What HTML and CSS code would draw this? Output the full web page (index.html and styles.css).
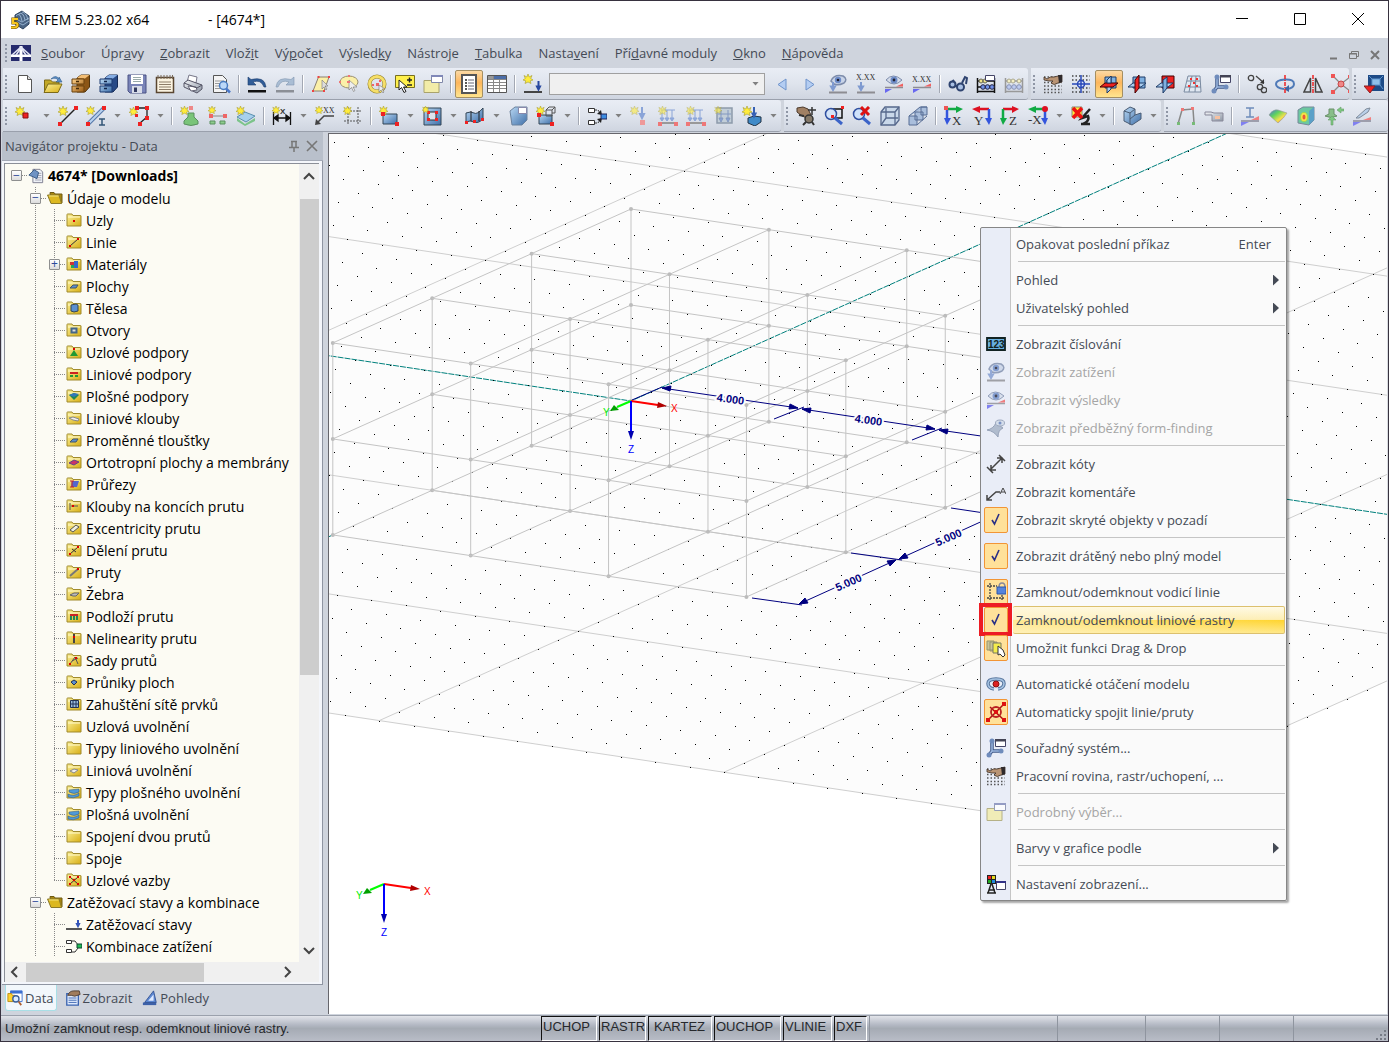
FILE: index.html
```html
<!DOCTYPE html>
<html lang="cs">
<head>
    <meta charset="UTF-8">
    <meta name="viewport" content="width=device-width, initial-scale=1.0">
    <title>RFEM 5.23.02 x64 - [4674*]</title>
    <link rel="stylesheet" href="styles.css">
</head>
<body>
    <!-- icon library -->
    <svg class="library" width="0" height="0" aria-hidden="true">
        <defs>
            <linearGradient id="g-blue" x1="0" y1="0" x2="1" y2="1"><stop offset="0" stop-color="#b9d8f4"/><stop offset="1" stop-color="#3f6fa8"/></linearGradient>
            <linearGradient id="g-gold" x1="0" y1="0" x2="1" y2="1"><stop offset="0" stop-color="#fbf19a"/><stop offset="1" stop-color="#d8ae14"/></linearGradient>
            <linearGradient id="g-orange" x1="0" y1="0" x2="1" y2="1"><stop offset="0" stop-color="#ffd28a"/><stop offset="1" stop-color="#9a5a12"/></linearGradient>
            <linearGradient id="g-grey" x1="0" y1="0" x2="1" y2="1"><stop offset="0" stop-color="#f2f4f7"/><stop offset="1" stop-color="#8d96a4"/></linearGradient>
            <linearGradient id="g-rainbow" x1="0" y1="0" x2="1" y2="1"><stop offset="0" stop-color="#4a6ee0"/><stop offset=".35" stop-color="#5fd35f"/><stop offset=".65" stop-color="#f4e04a"/><stop offset="1" stop-color="#e84a3a"/></linearGradient>

            <symbol id="star" viewBox="0 0 10 10"><path d="M5 0l1.200 3L9 1.500 7.700 4.500 10 6l-2.800.8L8 9.500 5 8 2 9.500l.8-2.700L0 6l2.300-1.500L1 1.500 3.800 3z" fill="#ffec3c" stroke="#a59a2c" stroke-width=".6"/></symbol>
            <symbol id="folder" viewBox="0 0 16 14"><path d="M1 3V1.500Q1 1 1.500 1H6l1 1.500h7.500q.5 0 .5.500v10H1z" fill="url(#g-gold)" stroke="#a08a2c"/><path d="M2 4h12" stroke="#fffbd0"/></symbol>
            <symbol id="folder-open" viewBox="0 0 16 14"><path d="M3 1.500h4l1 1.500h7v9H4z" fill="#a8860e" stroke="#6e5a12"/><path d="M.5 4H12l2.500 8.500H4z" fill="#dcb820" stroke="#8b7a2a"/><path d="M2 5h9.500" stroke="#f6e680"/></symbol>

            <symbol id="app" viewBox="0 0 20 20"><path d="M5 5l7-4 7 5v8l-6 5-8-5z" fill="#4a6484" stroke="#2f4560"/><path d="M6 6q4-5 6 5M9 4q4-3 6 6M12 2q4 0 6 8M6 9l6 3 7-4M7 12l6 3 6-4" fill="none" stroke="#a8c4e0" stroke-width=".8"/><path d="M8 9H3v4h2.500q2 0 2 2T5 17.500H1" fill="none" stroke="#6b4d00" stroke-width="3.200"/><path d="M8 9H3v4h2.500q2 0 2 2T5 17.500H1" fill="none" stroke="#f8c820" stroke-width="2"/></symbol>
            <symbol id="bridge" viewBox="0 0 20 16"><path d="M0 0h20v16H0z" fill="#252a6c"/><path d="M0 9.500h20v2.500H0zM8.500 1h3v15h-3z" fill="#fff"/><path d="M1 10L10 2l9 8M5 10l5-7 5 7" fill="none" stroke="#e4e6f4" stroke-width="1.500"/></symbol>
            <symbol id="new" viewBox="0 0 20 20"><path d="M3.500 1.500h9l4 4v13h-13z" fill="#fff" stroke="#555"/><path d="M12.500 1.500v4h4" fill="#ddd" stroke="#555"/></symbol>
            <symbol id="open" viewBox="0 0 20 20"><path d="M1.500 18V6h6l2 2H16v3" fill="#c2a826" stroke="#7c6a18"/><path d="M1 18.500L5 10h14l-4 8.500z" fill="url(#g-gold)" stroke="#7c6a18"/><path d="M8 5q5-5 8 0V3l3 5h-6l2-2q-2-3-7-1z" fill="#5b8fc8" stroke="#2f5a8c" stroke-width=".6"/></symbol>
            <symbol id="cabinet" viewBox="0 0 20 20"><path d="M6 4l4-3h8.500v12L14 18H6z" fill="#8c5616" stroke="#53350c"/><path d="M6 4l4-3h8.500L14 4.500z" fill="#f2bd74"/><path d="M1 5h12v5H1zM1 12h12v6H1z" fill="url(#g-orange)" stroke="#6a430e"/><path d="M5 7.500h3M5 14.500h3" stroke="#442a08" stroke-width="1.500"/></symbol>
            <symbol id="cabinet-blue" viewBox="0 0 20 20"><path d="M6 4l4-3h8.500v12L14 18H6z" fill="#284a86" stroke="#152b57"/><path d="M6 4l4-3h8.500L14 4.500z" fill="#86aee4"/><path d="M1 5h12v5H1zM1 12h12v6H1z" fill="url(#g-blue)" stroke="#1c3a70"/><path d="M5 7.500h3M5 14.500h3" stroke="#102448" stroke-width="1.500"/></symbol>
            <symbol id="save" viewBox="0 0 20 20"><path d="M1 1h18v18H3l-2-2z" fill="#7a84b8" stroke="#4a5284"/><path d="M4 1h12v9H4z" fill="#fff"/><path d="M6 3.500h8M6 5.500h8M6 7.500h8" stroke="#9aa"/><path d="M5 12h10v7H5z" fill="#d8dce8"/><path d="M7 13.500h3V18H7z" fill="#333a60"/></symbol>
            <symbol id="clip" viewBox="0 0 20 20"><path d="M1.500 3.500h17v15h-17z" fill="#fbf3e0" stroke="#5a4630" stroke-width="1.500"/><path d="M3 1v4M6 1v4M9 1v4M12 1v4M15 1v4M17.500 1v4" stroke="#7a6a58"/><path d="M4 8h12M4 10.500h12M4 13h12M4 15.500h12" stroke="#8c7c68"/></symbol>
            <symbol id="print" viewBox="0 0 20 20"><path d="M4 8L6 1l8 2-1 6z" fill="#fff" stroke="#778"/><path d="M1 9l4-3 14 5v4l-5 4L1 13z" fill="url(#g-grey)" stroke="#556"/><path d="M5 12l3 5 6-1-1-3z" fill="#fff" stroke="#667"/><path d="M1 9l13 5 5-3" fill="none" stroke="#556"/></symbol>
            <symbol id="preview" viewBox="0 0 20 20"><path d="M2.500 1.500h9l4 4v13h-13z" fill="#f4f4f4" stroke="#555"/><path d="M4 7h9M4 9.500h9M4 12h9M4 14.500h9" stroke="#999"/><circle cx="12.500" cy="11.500" r="4" fill="#bcd8f8" stroke="#4a7cc0" stroke-width="1.500"/><path d="M15 14.500l4 4" stroke="#4a78c8" stroke-width="2.500"/></symbol>
            <symbol id="undo" viewBox="0 0 20 20"><path d="M1 3v8h8L6 8q8-3 11 5h2Q18 2 4 5.500z" fill="#2f5c98" stroke="#1c3c6c" stroke-width=".6"/><path d="M1 16h18v2.500H1z" fill="#111"/></symbol>
            <symbol id="redo" viewBox="0 0 20 20"><path d="M19 3v8h-8l3-3q-8-3-11 5H1Q2 2 16 5.500z" fill="#a9bdd4" stroke="#8095ae" stroke-width=".6"/><path d="M1 16h18v2.500H1z" fill="#8b8f96"/></symbol>
            <symbol id="plane" viewBox="0 0 20 20"><path d="M7.500 3H18l-5 14H2z" fill="#fbf0a8" stroke="#8a8070"/><path d="M11 6v9l2-2 2 3 1-1-2-3h3z" fill="#ddd" stroke="#777" stroke-width=".6"/><path d="M6.500 2h2v2h-2zM17 2h2v2h-2zM1 16h2v2H1zM12 16h2v2h-2z" fill="#e44"/></symbol>
            <symbol id="ellipse" viewBox="0 0 20 20"><ellipse cx="10" cy="8" rx="9" ry="6" fill="#fbf0a8" stroke="#9a9070"/><path d="M10 6v10l2.500-2.500 2 4 1.500-1-2-3.500h4z" fill="#eee" stroke="#777" stroke-width=".6"/><path d="M0 7h2v2H0zM9 1h2v2H9zM8 7h3v2H8z" fill="#e77"/></symbol>
            <symbol id="circle-sel" viewBox="0 0 20 20"><circle cx="10" cy="10" r="7.500" fill="none" stroke="#968430" stroke-width="4"/><circle cx="10" cy="10" r="7.500" fill="none" stroke="#f6df68" stroke-width="2.800"/><path d="M9 9h3v3H9zM12 6h2v2h-2zM5 10h2v2H5z" fill="#e66"/><path d="M12 11v7l2-2 2 3 1-1-2-3h3z" fill="#eee" stroke="#777" stroke-width=".6"/></symbol>
            <symbol id="pick" viewBox="0 0 20 20"><path d="M.5 1.500h19v12H.5z" fill="#fff04c" stroke="#776e20"/><path d="M4 6v10l2.500-2.500 2.500 5 2-1-2.500-4.500H12z" fill="#fff" stroke="#222"/><path d="M12 6h5M14.500 3.500v5M12 11h5" stroke="#222" stroke-width="1.500"/></symbol>
            <symbol id="folder-win" viewBox="0 0 20 20"><path d="M1 18.500V6.500h9l2 2h4v10z" fill="#f2eca8" stroke="#a9a36c"/><path d="M8.500 1.500h11v7h-11z" fill="#fff" stroke="#8088a8"/><path d="M8 1h12v2H8z" fill="#8088b8"/></symbol>
            <symbol id="list" viewBox="0 0 20 20"><path d="M3 1h14v18H3z" fill="#fff" stroke="#555" stroke-width="2"/><path d="M6 6h2M6 9h2M6 12h2M6 15h2" stroke="#222" stroke-width="1.500"/><path d="M9 6h6M9 9h6M9 12h6M9 15h6" stroke="#667"/></symbol>
            <symbol id="table" viewBox="0 0 20 20"><path d="M.5 1.500h19v17H.5z" fill="#fff" stroke="#555"/><path d="M1 2h5v3H1z" fill="#999"/><path d="M6 2h13v3H6z" fill="#4c6ea8"/><path d="M1 5.500h18M1 8.500h18M1 11.500h18M1 14.500h18M6.500 2v16M12.500 5v13" stroke="#888"/></symbol>
            <symbol id="loadcase" viewBox="0 0 20 20"><use href="#star" width="10" height="10"/><path d="M1 18h18" stroke="#444" stroke-width="2"/><path d="M15.500 7v7M14 12.500l1.500 3 1.500-3z" fill="#3454b8" stroke="#2848a0" stroke-width="2"/></symbol>
            <symbol id="prev" viewBox="0 0 20 20"><path d="M14 5v11L6 10.500z" fill="#b4cdf2" stroke="#6f94cc"/></symbol>
            <symbol id="next" viewBox="0 0 20 20"><path d="M6 5v11l8-5.500z" fill="#b4cdf2" stroke="#6f94cc"/></symbol>
            <symbol id="eye-load" viewBox="0 0 20 20"><path d="M3 7q3-7 12-5 5 3 1 7-6 3-10 1z" fill="#c9d4e8" stroke="#7d8cab" stroke-width="1.500"/><circle cx="10" cy="6" r="3.200" fill="#6d8cc8"/><circle cx="10" cy="6" r="1.300" fill="#223"/><path d="M5 8v6M3 12.500l2 3.500 2-3.500z" fill="#8fa9dc" stroke="#7f9ad0" stroke-width="2"/><path d="M1 18.500h18" stroke="#8d8d92" stroke-width="2"/></symbol>
            <symbol id="xxx-load" viewBox="0 0 20 20"><text x="0" y="6" class="tiny serif">X.XX</text><path d="M5 8v6M3 12.500l2 3.500 2-3.500z" fill="#8fa9dc" stroke="#7f9ad0" stroke-width="2"/><path d="M1 18.500h18" stroke="#8d8d92" stroke-width="2"/></symbol>
            <symbol id="eye-res" viewBox="0 0 20 20"><path d="M2 6q7-8 16 0-8 8-16 0z" fill="#d5dcea" stroke="#7d8cab"/><circle cx="10" cy="6" r="3.500" fill="#6d8cc8"/><circle cx="10" cy="6" r="1.400" fill="#223"/><path d="M1 13.500h18" stroke="#8d8d92" stroke-width="1.500"/><path d="M12 12.500l7-3v3z" fill="#f06060"/><path d="M1 15v4l7-4z" fill="#6868f0"/></symbol>
            <symbol id="xxx-res" viewBox="0 0 20 20"><text x="0" y="8" class="tiny serif">X.XX</text><path d="M1 13.500h18" stroke="#8d8d92" stroke-width="1.500"/><path d="M12 12.500l7-3v3z" fill="#f06060"/><path d="M1 15v4l7-4z" fill="#6868f0"/></symbol>
            <symbol id="glasses" viewBox="0 0 20 20"><path d="M3 9l3-3M14 9l3-6 2 1-1 6M7 12h3" fill="none" stroke="#2f4470" stroke-width="2"/><circle cx="4.500" cy="10.500" r="3" fill="#a9c0e4" stroke="#2f4470" stroke-width="2"/><circle cx="12.500" cy="13" r="3.500" fill="#a9c0e4" stroke="#2f4470" stroke-width="2"/></symbol>
            <symbol id="abacus" viewBox="0 0 20 20"><path d="M1.500 4v15M18.500 4v15M1 7h18M1 13h18M1 17.500h18" stroke="#111" stroke-width="1.500"/><g fill="#f0e48c" stroke="#665"><circle cx="5" cy="7" r="2"/><circle cx="9" cy="7" r="2"/></g><g fill="#6f90e8" stroke="#224"><circle cx="7" cy="13" r="2.300"/><circle cx="11.500" cy="13" r="2.300"/><circle cx="16" cy="13" r="2.300"/></g><path d="M9.500 1.500h9v5h-9z" fill="#fff" stroke="#446"/></symbol>
            <symbol id="abacus-off" viewBox="0 0 20 20"><path d="M1.500 4v15M18.500 4v15M1 7h18M1 13h18M1 17.500h18" stroke="#999" stroke-width="1.500"/><g fill="#f4efc4" stroke="#aaa890"><circle cx="5" cy="7" r="2"/><circle cx="9" cy="7" r="2"/><circle cx="15" cy="7" r="2"/></g><g fill="#bccaf0" stroke="#8892b4"><circle cx="5" cy="13" r="2.300"/><circle cx="10" cy="13" r="2.300"/><circle cx="15" cy="13" r="2.300"/></g></symbol>
            <symbol id="hand-grid" viewBox="0 0 20 20"><path d="M1 12h18M1 15.500h18M1 18.500h18M1 8.500h18M1 3h18" stroke="#555" stroke-width="1.500" stroke-dasharray="1.500 2"/><path d="M1 3l3 2q3-3 7-2l8-2v7l-4 1q-4 3-7 0l2-2-4 0-5-1z" fill="#b99474" stroke="#3c2e24" stroke-width=".8"/><path d="M15 1l4 0v7l-3 1z" fill="#2f2a2c"/></symbol>
            <symbol id="snap" viewBox="0 0 20 20"><path d="M1 2h18M1 6h18M1 14h18M1 18h18" stroke="#444" stroke-width="1.500" stroke-dasharray="1.500 2"/><circle cx="10" cy="10" r="3.500" fill="#dfe8fa" stroke="#2848b8" stroke-width="1.500"/><path d="M10 1v18M1 10h18" stroke="#2848b8" stroke-width="1.500"/></symbol>
            <symbol id="cube-h" viewBox="0 0 20 20"><path d="M6 3h11v11H6z" fill="#7fb0e0" stroke="#1d3a66"/><path d="M8 6l4-4v13l-4 4z" fill="#a9ccee" stroke="#1d3a66"/><path d="M1 13l5-4h13l-5 4z" fill="#e22" stroke="#400"/><path d="M8 6l4-4v7H8z" fill="#a9ccee" stroke="#1d3a66"/></symbol>
            <symbol id="cube-v" viewBox="0 0 20 20"><path d="M6 3h12v11H6z" fill="#7fb0e0" stroke="#1d3a66"/><path d="M1 13l5-4h13l-5 4z" fill="#a9ccee" stroke="#1d3a66"/><path d="M8 6l4-5v13l-4 5z" fill="#e22" stroke="#400"/></symbol>
            <symbol id="cube-f" viewBox="0 0 20 20"><path d="M7 2h12v12H7z" fill="#e22" stroke="#400"/><path d="M1 13l5-4h12l-5 4z" fill="#a9ccee" stroke="#1d3a66"/><path d="M8 6l4-3v11l-4 5z" fill="#7fb0e0" stroke="#1d3a66"/></symbol>
            <symbol id="mesh" viewBox="0 0 20 20"><path d="M5 2h12l1 16H1zM4 7h13M2 13h16M9 2L6 18M13 2l-1 16" fill="#dfe7f1" stroke="#7a8aa0"/><path d="M7 4h2v2H7zM13 4h2v2h-2zM5 11h2v2H5zM13 11h2v2h-2zM10 8h2v2h-2z" fill="#e33"/></symbol>
            <symbol id="axes" viewBox="0 0 20 20"><path d="M6 3v10M6 13h8M6 13l-3 4" stroke="#3f5888" stroke-width="3.500"/><path d="M6 3v10M6 13h8M6 13l-3 4" stroke="#9db8e0" stroke-width="1.500"/><circle cx="6" cy="3" r="2.500" fill="#6f8cbc"/><circle cx="3" cy="17" r="2.500" fill="#6f8cbc"/><circle cx="15" cy="13" r="2.500" fill="#6f8cbc"/><path d="M9.500 1.500h10v7h-10z" fill="#fff" stroke="#446"/><path d="M9 1h11v2.500H9z" fill="#445"/></symbol>
            <symbol id="copy-move" viewBox="0 0 20 20"><g fill="none" stroke="#444" stroke-width="1.300"><circle cx="4" cy="4" r="2.700"/><circle cx="13" cy="13" r="2.700"/><circle cx="17" cy="16" r="2.700"/><path d="M9 2l8 7"/></g><path d="M17 10V5l-4 4z" fill="#333"/></symbol>
            <symbol id="rotate" viewBox="0 0 20 20"><path d="M9 15q-8-1-8-5t9-4.500T19 10q0 4-7 5" fill="none" stroke="#4f7ab8" stroke-width="2"/><path d="M14 11v7l-5-3z" fill="#3c66a4"/><path d="M10 1v18" stroke="#e22" stroke-width="1.500" stroke-dasharray="4 1 1 1"/></symbol>
            <symbol id="mirror" viewBox="0 0 20 20"><path d="M7.500 4v14H1zM12.500 4v14H19z" fill="none" stroke="#444" stroke-width="1.500"/><path d="M10 1v18" stroke="#e22" stroke-width="1.500" stroke-dasharray="4 1 1 1"/></symbol>
            <symbol id="connect" viewBox="0 0 20 20"><path d="M2 2l8 8 9-7M10 10l9 7M10 10l-8 8" fill="none" stroke="#888" stroke-width="1.300"/><circle cx="10" cy="10" r="3" fill="#e88" stroke="#c44"/><path d="M0 0h4v4H0zM0 16h4v4H0zM17 1h3v3h-3zM17 16h3v3h-3z" fill="#e55"/></symbol>
            <symbol id="export" viewBox="0 0 20 20"><path d="M4 1h16v16H4z" fill="#1d4a86"/><path d="M8 5h8v6H8zM5 2l3 3M19 2l-3 3M19 15l-3-4" fill="#8fc0ea" stroke="#5f94cc"/><path d="M0 12h11l-5 7z" fill="#e22" stroke="#822"/></symbol>

            <symbol id="node-new" viewBox="0 0 20 20"><use href="#star" width="10" height="10"/><path d="M8 7h5v5H8z" fill="#e22" stroke="#811"/></symbol>
            <symbol id="line-new" viewBox="0 0 20 20"><path d="M2 18L18 2" stroke="#222" stroke-width="1.500"/><use href="#star" width="10" height="10"/><path d="M0 16h4v4H0zM16 0h4v4h-4z" fill="#e22"/></symbol>
            <symbol id="member-new" viewBox="0 0 20 20"><path d="M2 18L18 2" stroke="#5578a8" stroke-width="4"/><path d="M2 18L18 2" stroke="#b9d2f0" stroke-width="2"/><use href="#star" width="9" height="9"/><path d="M0 16h4v4H0zM16 0h4v4h-4z" fill="#e22"/><path d="M13 13h6M13 19h6M16 13v6" stroke="#357" stroke-width="1.500"/></symbol>
            <symbol id="poly-new" viewBox="0 0 20 20"><path d="M8 2h10v9l-7 6" fill="none" stroke="#222" stroke-width="1.300"/><use href="#star" y="1" width="9" height="9"/><path d="M6 0h4v4H6zM16 0h4v4h-4zM16 10h4v4h-4zM9 16h4v4H9zM6 8h3v3H6z" fill="#e22"/></symbol>
            <symbol id="support" viewBox="0 0 20 20"><use href="#star" width="9" height="9"/><path d="M9 0h4v4H9z" fill="#e88"/><path d="M8 7h6v4l4 4v3q-7 3-14 0v-3l4-4z" fill="#79c479" stroke="#5a9060"/></symbol>
            <symbol id="support-line" viewBox="0 0 20 20"><path d="M3 10h14" stroke="#888"/><use href="#star" width="8" height="8"/><path d="M1 8h4v4H1zM15 8h4v4h-4z" fill="#e66"/><path d="M2 15h5v3H2zM12 15h5v3h-5z" fill="#8ccc8c" stroke="#5a9060"/></symbol>
            <symbol id="support-area" viewBox="0 0 20 20"><path d="M1 12l8 6 10-6v3l-10 5-8-5z" fill="#7cc48a"/><path d="M1 11l8-5 10 4-9 6z" fill="#a7d0ee" stroke="#5b90ae"/><use href="#star" width="9" height="9"/></symbol>
            <symbol id="dim" viewBox="0 0 20 20"><path d="M1.500 6v13M18.500 6v13M1 12h18M2 12l4-3v6zM18 12l-4-3v6z" stroke="#111" stroke-width="1.300"/><text x="8" y="8" class="tiny bold">X</text><use href="#star" width="8" height="8"/></symbol>
            <symbol id="comment" viewBox="0 0 20 20"><path d="M2 17l7-7h10" fill="none" stroke="#444" stroke-width="1.500"/><path d="M0 19l1-6 5 5z" fill="#444"/><text x="8" y="7" class="tiny serif">XX</text><use href="#star" width="8" height="8"/></symbol>
            <symbol id="guide" viewBox="0 0 20 20"><path d="M1 5h18M1 15h18M5 1v18M15 1v18" stroke="#555" stroke-dasharray="2 1"/><use href="#star" width="9" height="9"/></symbol>
            <symbol id="surface" viewBox="0 0 20 20"><path d="M4 8h14v10H4z" fill="url(#g-blue)" stroke="#345"/><use href="#star" width="9" height="9"/><path d="M2 6h4v4H2zM16 16h4v4h-4z" fill="#e22"/></symbol>
            <symbol id="opening" viewBox="0 0 20 20"><path d="M2 2h17v17H2z" fill="url(#g-blue)" stroke="#345"/><path d="M6 6h8v8H6z" fill="#dde3ee" stroke="#333"/><path d="M5 5h3v3H5zM13 5h3v3h-3zM5 12h3v3H5zM13 12h3v3h-3z" fill="#e22"/><use href="#star" width="7" height="7"/></symbol>
            <symbol id="curved" viewBox="0 0 20 20"><path d="M1 7q5-2 8 0t9-5v11q-5 5-9 3t-8 0z" fill="url(#g-blue)" stroke="#345"/><path d="M6 5v10M14 5v10" stroke="#222"/><path d="M0 15h3v3H0zM8 14h3v3H8zM16 12h3v3h-3z" fill="#e22"/></symbol>
            <symbol id="solid" viewBox="0 0 20 20"><path d="M2 5l5-4h12v13l-5 5H4z" fill="url(#g-blue)" stroke="#6b829e"/><path d="M10.500 1.500h8v6h-8z" fill="#fff" stroke="#88a"/></symbol>
            <symbol id="solid-new" viewBox="0 0 20 20"><path d="M3 9h13v9H3z" fill="url(#g-blue)" stroke="#345"/><path d="M10 4h6v6h-6zM13 1h6v6h-3M10 4l3-3M16 4l3-3" fill="none" stroke="#555"/><use href="#star" width="9" height="9"/><path d="M1 7h4v4H1zM14 16h4v4h-4z" fill="#e22"/></symbol>
            <symbol id="combo" viewBox="0 0 20 20"><path d="M1.500 2.500h6v4h-6zM1.500 14.500h6v4h-6z" fill="#fff" stroke="#333"/><path d="M8 4h3l3 5M8 17h3l3-5" fill="none" stroke="#333" stroke-dasharray="2 1"/><path d="M10 8l5 1-1-5zM10 13l5-1-1 5z" fill="#222"/><path d="M14 8h6v5h-6z" fill="#3c8be0" stroke="#225"/></symbol>
            <symbol id="load-node" viewBox="0 0 20 20"><path d="M12 1v8M10 8l2 4 2-4z" fill="#9fb6e4" stroke="#8aa4d8" stroke-width="2"/><path d="M10 14h5v5h-5z" fill="#e99"/><use href="#star" width="9" height="9" opacity=".6"/></symbol>
            <symbol id="load-line" viewBox="0 0 20 20"><path d="M3 4h14M4 4v10M9 4v10M14 4v10M2 12l2 3 2-3zM7 12l2 3 2-3zM12 12l2 3 2-3z" fill="#9fb6e4" stroke="#8aa4d8"/><path d="M1 17h18" stroke="#999" stroke-width="2"/><path d="M0 16h4v4H0zM16 16h4v4h-4z" fill="#e77"/><use href="#star" width="9" height="9" opacity=".6"/></symbol>
            <symbol id="load-area" viewBox="0 0 20 20"><path d="M3 2h15v15H3z" fill="#c2ced8" stroke="#8d9bab" stroke-width="1.500"/><path d="M7 4v9M14 4v9M4 8h13M5 12l2 4 2-4zM12 12l2 4 2-4z" fill="#8aa4d8" stroke="#8298c0"/><use href="#star" width="8" height="8" opacity=".6"/></symbol>
            <symbol id="load-free" viewBox="0 0 20 20"><path d="M6 12l6-2 7 1v5l-6 4-7-3z" fill="#3f8ac8" stroke="#234"/><path d="M12 1v8M10.500 7.500l1.500 3 1.500-3z" fill="#4c76c8" stroke="#3560b4" stroke-width="2"/><use href="#star" width="10" height="10"/></symbol>
            <symbol id="hand-pan" viewBox="0 0 20 20"><path d="M1 2l6-1 5 2 3 6-4 3-5-2-5-4z" fill="#a08064" stroke="#4c3a2c"/><path d="M16 1v8M12 4h8" stroke="#333" stroke-width="1.500"/><circle cx="13" cy="13" r="4" fill="#847868" stroke="#333" stroke-width="1.500"/><path d="M10 16l-3 3M16 16l2 3M8 10l-5-1" stroke="#333" stroke-width="2"/></symbol>
            <symbol id="zoom-win" viewBox="0 0 20 20"><path d="M7 3h11v9H9" fill="none" stroke="#111" stroke-width="1.500"/><circle cx="7" cy="8" r="5.500" fill="#cfe2fa" fill-opacity=".8" stroke="#2f4fa0" stroke-width="1.500"/><path d="M11 12l7 6" stroke="#3c64c8" stroke-width="3"/><path d="M17 0h3v3h-3zM7 9h3v3H7z" fill="#e22"/></symbol>
            <symbol id="zoom-x" viewBox="0 0 20 20"><circle cx="7" cy="8" r="5.500" fill="#cfe2fa" stroke="#2f4fa0" stroke-width="1.500"/><path d="M11 12l7 6" stroke="#3c64c8" stroke-width="3"/><path d="M9 1l8 8M17 1L9 9" stroke="#d11" stroke-width="3"/></symbol>
            <symbol id="wire" viewBox="0 0 20 20"><path d="M1 6l4-5h14v13l-4 5H1z" fill="#c9d8ea" stroke="#56688c" stroke-width="1.300"/><path d="M1 6h14v13M15 6l4-5M6 2v10h12M6 12l-5 7" fill="none" stroke="#56688c" stroke-width="1.300"/></symbol>
            <symbol id="boxes" viewBox="0 0 20 20"><path d="M1 10h8v9H1zM7 6h8v8H7zM13 1h6v8h-6zM1 10L12 1h7M9 19l10-9" fill="#a9bedc" stroke="#566c94"/></symbol>
            <symbol id="view-x" viewBox="0 0 20 20"><path d="M3 3h10" stroke="#1a4" stroke-width="2.500"/><path d="M12 0l7 3-7 4z" fill="#1a4"/><path d="M3 3v10" stroke="#35d" stroke-width="2.500"/><path d="M0 12l3 7 4-7z" fill="#35d"/><path d="M0 0h4v4H0z" fill="#e55"/><text x="8" y="19" class="letter serif">X</text></symbol>
            <symbol id="view-y" viewBox="0 0 20 20"><path d="M17 3H7" stroke="#d12" stroke-width="2.500"/><path d="M8 0L0 3l8 4z" fill="#d12"/><path d="M17 3v10" stroke="#35d" stroke-width="2.500"/><path d="M13 12l4 7 3-7z" fill="#35d"/><text x="2" y="19" class="letter serif">Y</text></symbol>
            <symbol id="view-z" viewBox="0 0 20 20"><path d="M3 3h10" stroke="#d12" stroke-width="2.500"/><path d="M12 0l7 3-7 4z" fill="#d12"/><path d="M3 3v10" stroke="#1a4" stroke-width="2.500"/><path d="M0 12l3 7 4-7z" fill="#1a4"/><text x="9" y="19" class="letter serif">Z</text></symbol>
            <symbol id="view-mx" viewBox="0 0 20 20"><path d="M16 3H7" stroke="#1a4" stroke-width="2.500"/><path d="M8 0L0 3l8 4z" fill="#1a4"/><path d="M17 3v10" stroke="#35d" stroke-width="2.500"/><path d="M13 12l4 7 3-7z" fill="#35d"/><circle cx="17" cy="3" r="3" fill="#d12"/><text x="0" y="18" class="letter serif">-X</text></symbol>
            <symbol id="no-view" viewBox="0 0 20 20"><path d="M10 18h9M12 18q7-3 5-8l-6 2 8-9" fill="none" stroke="#222" stroke-width="2.500"/><path d="M1 1h10v10H1z" fill="#ffe93c" stroke="#887"/><path d="M2 2l9 10M11 2L2 12" stroke="#e11" stroke-width="3.500"/></symbol>
            <symbol id="profile" viewBox="0 0 20 20"><path d="M2 5l6-4 5 2v6l6-2v6l-9 6-8-4z" fill="url(#g-blue)" stroke="#4a5c74"/><path d="M2 5l6 2v12M8 7l5-4M8 13l5-4" fill="none" stroke="#4a5c74"/></symbol>
            <symbol id="frame" viewBox="0 0 20 20"><path d="M2 18L6 4l11-1 1 14" fill="none" stroke="#888" stroke-width="1.500"/><path d="M5 2h3v3H5zM15 1h3v3h-3z" fill="#e77"/><path d="M1 16h3v3H1zM16 16h3v3h-3z" fill="#7b7"/></symbol>
            <symbol id="camera" viewBox="0 0 20 20"><path d="M1 6h6l3 1h9v8H8V9H1z" fill="url(#g-grey)" stroke="#889"/><path d="M11 10h5v3h-5z" fill="#f6c0a0"/></symbol>
            <symbol id="res-beam" viewBox="0 0 20 20"><path d="M6 2h8M6 11h8M10 2v9" stroke="#6e8cba" stroke-width="1.500"/><path d="M1 15h18" stroke="#889" stroke-width="1.300"/><path d="M11 14l8-4v4z" fill="#f08080"/><path d="M1 16v4l8-4z" fill="#8080f0"/></symbol>
            <symbol id="res-area" viewBox="0 0 20 20"><path d="M1 9q4-6 9-5l9 3q-3 5-9 10z" fill="url(#g-rainbow)" stroke="#999" stroke-width=".6"/></symbol>
            <symbol id="res-solid" viewBox="0 0 20 20"><path d="M2 4l5-3h11v13l-5 5-11-2z" fill="#6cc8a0" stroke="#789"/><path d="M13 5l5-4v13l-5 5z" fill="#5aa0c8"/><ellipse cx="8" cy="11" rx="3.500" ry="4.500" fill="#f6e24a" stroke="#a0d84a"/><ellipse cx="8" cy="11" rx="1.500" ry="2.500" fill="#e85a3a"/></symbol>
            <symbol id="reaction" viewBox="0 0 20 20"><path d="M5 3h5v5l3 2q-6 3-12 0l4-2z" fill="#88be88" stroke="#6a906a"/><path d="M13 4l4-3v2h3v2h-3v2zM7 19v-5H4l4-4 4 4H9v5z" fill="#7cc880" stroke="#6aa06a" stroke-width=".6"/></symbol>
            <symbol id="res-line" viewBox="0 0 20 20"><path d="M4 12L14 3l4-1-2 4-9 6z" fill="#b9cfe8" stroke="#7e8a9a"/><path d="M1 15h18" stroke="#889" stroke-width="1.300"/><path d="M11 14l8-3v3z" fill="#f08080"/><path d="M1 16v4l8-4z" fill="#8080f0"/></symbol>

            <symbol id="m123" viewBox="0 0 20 20"><path d="M1 4h18v12H1z" fill="#68b0e0" stroke="#122" stroke-width="1.800"/><text x="2" y="14" class="number bold">123</text></symbol>
            <symbol id="form" viewBox="0 0 20 20"><path d="M1 12q6-1 9-7l7 5q-5 2-5 9-4-6-11-7z" fill="#a3b0c4" stroke="#808fa8"/><ellipse cx="14" cy="5" rx="4.500" ry="3" fill="#d0dae8" stroke="#8a98b0"/><circle cx="14" cy="5" r="1.500" fill="#5f7cb8"/></symbol>
            <symbol id="mdim" viewBox="0 0 20 20"><path d="M1 13l6 6M13 1l6 6M4 16L16 4M5 11v5h5M11 4h5v5" fill="none" stroke="#444" stroke-width="1.500"/></symbol>
            <symbol id="mcomment" viewBox="0 0 20 20"><path d="M1 18l9-8h4M1 13v5h5" fill="none" stroke="#444" stroke-width="1.500"/><path d="M14 12l3-6 3 6M15 10h4" fill="none" stroke="#444"/></symbol>
            <symbol id="tick" viewBox="0 0 20 20"><path d="M6 10l2.500 4L13 4" fill="none" stroke="#2a2f86" stroke-width="1.600"/></symbol>
            <symbol id="lock-grid" viewBox="0 0 20 20"><path d="M1 4h10M1 16h18M4 1v18M16 13v6" stroke="#444" stroke-width="1.300" stroke-dasharray="2 1"/><path d="M13 5q0-4 3-4t3 4" fill="none" stroke="#889" stroke-width="1.500"/><path d="M11 5h9v7h-9z" fill="#5584dc" stroke="#2f56a8"/></symbol>
            <symbol id="drag" viewBox="0 0 20 20"><path d="M1 3h7v9H1zM4 4h7v9H4z" fill="#c8c49a" stroke="#98946c"/><path d="M7 5h8v10H7z" fill="#f4ec4c" stroke="#776"/><path d="M12 8v9l2-1 3 3 2-2-2-5z" fill="#fff" stroke="#333"/></symbol>
            <symbol id="auto-rot" viewBox="0 0 20 20"><path d="M8 15q-6-1-6-5.500T10 5t8 4.500-6 5.500" fill="none" stroke="#56749c" stroke-width="3.500"/><path d="M8 15q-6-1-6-5.500T10 5t8 4.500-6 5.500" fill="none" stroke="#a5c2e2" stroke-width="1.500"/><circle cx="10" cy="10" r="3" fill="#d22" stroke="#811"/></symbol>
            <symbol id="auto-con" viewBox="0 0 20 20"><path d="M2 18L18 2M4 5l14 13" stroke="#a11" stroke-width="1.500"/><circle cx="10" cy="10" r="5" fill="none" stroke="#b22" stroke-width="1.800"/><path d="M0 16h4v4H0zM16 0h4v4h-4zM16 16h4v4h-4zM8 8h4v4H8z" fill="#d11"/></symbol>
            <symbol id="display" viewBox="0 0 20 20"><path d="M1 1h9v9H1z" fill="#222"/><path d="M2 2h3v3H2z" fill="#e22"/><path d="M6 2h3v3H6z" fill="#e8d820"/><path d="M2 6h3v3H2z" fill="#2a2"/><path d="M6 6h3v3H6z" fill="#28d"/><path d="M5 10L2 19M6 10l3 9M3 16h6M1 19h9" stroke="#222" stroke-width="1.500"/><path d="M10.500 7.500h9v8h-9z" fill="#fff" stroke="#446"/><path d="M10 7h10v2H10z" fill="#338"/></symbol>

            <symbol id="t-data" viewBox="0 0 18 18"><path d="M4 1h13v12H4z" fill="#fff" stroke="#3b6fd0"/><path d="M4 1h13v3H4z" fill="#3b6fd0"/><path d="M1 4h4l1 2h3v7H1z" fill="#ffd22e" stroke="#b98a10"/><circle cx="10" cy="10" r="3.500" fill="#dcecff" stroke="#3a5f98" stroke-width="1.500"/><path d="M13 13l3 4" stroke="#b06030" stroke-width="2"/></symbol>
            <symbol id="t-show" viewBox="0 0 18 18"><path d="M2 4h13v13H2z" fill="#dfeafc" stroke="#3b64b0" stroke-width="1.500"/><path d="M4 9h9M4 11.500h9M4 14h9" stroke="#3b64b0"/><path d="M3 6q2-5 7-5h6l1 4-6 2-4-1z" fill="#a07c5c" stroke="#4c3a2c"/></symbol>
            <symbol id="t-views" viewBox="0 0 18 18"><path d="M1 14h15v3H1z" fill="#3c60a8"/><path d="M3 14L13 1l3 13z" fill="#5f8ad4" stroke="#2f4f90"/><path d="M7 12l6-7v7z" fill="#dfeaff"/></symbol>
            <symbol id="doc" viewBox="0 0 18 18"><path d="M5.500 1.500h8l3 3v12h-11z" fill="#eef1f6" stroke="#778"/><path d="M10 6h5M10 8.500h5M8 11h7M8 13.500h7" stroke="#99a"/><path d="M1 8l6-6 5 3-2 7-4-2z" fill="#6f93c4" stroke="#34557f"/></symbol>
        </defs>
    </svg>

    <div class="window">
        <header class="titlebar">
            <svg class="icon"><use href="#app"/></svg>
            <h1 class="title">RFEM 5.23.02 x64</h1>
            <span class="document">- [4674*]</span>
            <div class="window-buttons">
                <button type="button" aria-label="Minimalizovat"><svg width="14" height="14"><path d="M1 6.500h12" stroke="#000"/></svg></button>
                <button type="button" aria-label="Maximalizovat"><svg width="14" height="14"><path d="M1.500 1.500h11v11h-11z" fill="none" stroke="#000"/></svg></button>
                <button type="button" aria-label="Zavřít"><svg width="14" height="14"><path d="M1 1l12 12M13 1L1 13" stroke="#000"/></svg></button>
            </div>
        </header>

        <nav class="menubar">
            <span class="grip"></span>
            <svg class="bridge"><use href="#bridge"/></svg>
            <div class="menus">
                <button type="button"><u>S</u>oubor</button>
                <button type="button">Úpr<u>a</u>vy</button>
                <button type="button"><u>Z</u>obrazit</button>
                <button type="button">Vlož<u>i</u>t</button>
                <button type="button">Vý<u>p</u>očet</button>
                <button type="button">Výsled<u>k</u>y</button>
                <button type="button">Nástro<u>j</u>e</button>
                <button type="button"><u>T</u>abulka</button>
                <button type="button">Nasta<u>v</u>ení</button>
                <button type="button">Pří<u>d</u>avné moduly</button>
                <button type="button"><u>O</u>kno</button>
                <button type="button"><u>N</u>ápověda</button>
            </div>
            <div class="mdi-buttons">
                <button type="button" aria-label="Minimalizovat okno"><svg width="10" height="10"><path d="M2 8.500h7" stroke="#777" stroke-width="2"/></svg></button>
                <button type="button" aria-label="Obnovit okno"><svg width="10" height="10"><path d="M.5 3.500h7v5h-7zM2.500 3V1.500h7v5H8M0 4h8" fill="none" stroke="#777"/></svg></button>
                <button type="button" aria-label="Zavřít okno"><svg width="10" height="10"><path d="M1 1l8 8M9 1L1 9" stroke="#777" stroke-width="2"/></svg></button>
            </div>
        </nav>

        <div class="toolbar-row">
            <div class="toolbar">
                <span class="grip"></span>
                <button type="button" aria-label="Nový"><svg class="icon"><use href="#new"/></svg></button>
                <button type="button" aria-label="Otevřít"><svg class="icon"><use href="#open"/></svg></button>
                <button type="button" aria-label="Manažer projektů"><svg class="icon"><use href="#cabinet"/></svg></button>
                <button type="button" aria-label="Manažer bloků"><svg class="icon"><use href="#cabinet-blue"/></svg></button>
                <button type="button" aria-label="Uložit"><svg class="icon"><use href="#save"/></svg></button>
                <button type="button" aria-label="Protokol"><svg class="icon"><use href="#clip"/></svg></button>
                <button type="button" aria-label="Tisk"><svg class="icon"><use href="#print"/></svg></button>
                <button type="button" aria-label="Náhled"><svg class="icon"><use href="#preview"/></svg></button>
                <span class="divider"></span>
                <button type="button" aria-label="Zpět"><svg class="icon"><use href="#undo"/></svg></button>
                <button type="button" aria-label="Znovu"><svg class="icon"><use href="#redo"/></svg></button>
                <span class="divider"></span>
                <button type="button" aria-label="Výběr v rovině"><svg class="icon"><use href="#plane"/></svg></button>
                <button type="button" aria-label="Výběr elipsou"><svg class="icon"><use href="#ellipse"/></svg></button>
                <button type="button" aria-label="Výběr mezikružím"><svg class="icon"><use href="#circle-sel"/></svg></button>
                <button type="button" aria-label="Přidat k výběru"><svg class="icon"><use href="#pick"/></svg></button>
                <button type="button" aria-label="Podrobný výběr"><svg class="icon"><use href="#folder-win"/></svg></button>
                <span class="divider"></span>
                <button type="button" class="active" aria-label="Navigátor"><svg class="icon"><use href="#list"/></svg></button>
                <button type="button" aria-label="Tabulky"><svg class="icon"><use href="#table"/></svg></button>
                <span class="divider"></span>
                <button type="button" aria-label="Nový zatěžovací stav"><svg class="icon"><use href="#loadcase"/></svg></button>
                <div class="combo"><select aria-label="Zatěžovací stav"><option></option></select><span class="caret"></span></div>
                <button type="button" aria-label="Předchozí"><svg class="icon"><use href="#prev"/></svg></button>
                <button type="button" aria-label="Další"><svg class="icon"><use href="#next"/></svg></button>
                <button type="button" aria-label="Zobrazit zatížení"><svg class="icon"><use href="#eye-load"/></svg></button>
                <button type="button" aria-label="Hodnoty zatížení"><svg class="icon"><use href="#xxx-load"/></svg></button>
                <button type="button" aria-label="Zobrazit výsledky"><svg class="icon"><use href="#eye-res"/></svg></button>
                <button type="button" aria-label="Hodnoty výsledků"><svg class="icon"><use href="#xxx-res"/></svg></button>
                <span class="divider"></span>
                <button type="button" aria-label="Kontrola"><svg class="icon"><use href="#glasses"/></svg></button>
                <button type="button" aria-label="Výpočet"><svg class="icon"><use href="#abacus"/></svg></button>
                <button type="button" aria-label="Spočítat vše"><svg class="icon"><use href="#abacus-off"/></svg></button>
            </div>
            <div class="toolbar toolbar-fill">
                <span class="grip"></span>
                <button type="button" aria-label="Pracovní rovina"><svg class="icon"><use href="#hand-grid"/></svg></button>
                <button type="button" aria-label="Uchopení"><svg class="icon"><use href="#snap"/></svg></button>
                <button type="button" class="active" aria-label="Rovina XY"><svg class="icon"><use href="#cube-h"/></svg></button>
                <button type="button" aria-label="Rovina YZ"><svg class="icon"><use href="#cube-v"/></svg></button>
                <button type="button" aria-label="Rovina XZ"><svg class="icon"><use href="#cube-f"/></svg></button>
                <button type="button" aria-label="Liniový rastr"><svg class="icon"><use href="#mesh"/></svg></button>
                <button type="button" aria-label="Souřadný systém"><svg class="icon"><use href="#axes"/></svg></button>
                <span class="divider"></span>
                <button type="button" aria-label="Posunout"><svg class="icon"><use href="#copy-move"/></svg></button>
                <button type="button" aria-label="Otočit"><svg class="icon"><use href="#rotate"/></svg></button>
                <button type="button" aria-label="Zrcadlit"><svg class="icon"><use href="#mirror"/></svg></button>
                <button type="button" aria-label="Spojit"><svg class="icon"><use href="#connect"/></svg></button>
            </div>
            <div class="toolbar">
                <span class="grip"></span>
                <button type="button" aria-label="Export"><svg class="icon"><use href="#export"/></svg></button>
            </div>
        </div>

        <div class="toolbar-row">
            <div class="toolbar">
                <span class="grip"></span>
                <button type="button" aria-label="Uzel"><svg class="icon"><use href="#node-new"/></svg></button>
                <button type="button" class="more" aria-label="Další uzly"></button>
                <button type="button" aria-label="Linie"><svg class="icon"><use href="#line-new"/></svg></button>
                <button type="button" aria-label="Prut"><svg class="icon"><use href="#member-new"/></svg></button>
                <button type="button" class="more" aria-label="Další pruty"></button>
                <button type="button" aria-label="Polylinie"><svg class="icon"><use href="#poly-new"/></svg></button>
                <button type="button" class="more" aria-label="Další linie"></button>
                <span class="divider"></span>
                <button type="button" aria-label="Uzlová podpora"><svg class="icon"><use href="#support"/></svg></button>
                <button type="button" aria-label="Liniová podpora"><svg class="icon"><use href="#support-line"/></svg></button>
                <button type="button" aria-label="Plošná podpora"><svg class="icon"><use href="#support-area"/></svg></button>
                <span class="divider"></span>
                <button type="button" aria-label="Kóta"><svg class="icon"><use href="#dim"/></svg></button>
                <button type="button" class="more" aria-label="Další kóty"></button>
                <button type="button" aria-label="Komentář"><svg class="icon"><use href="#comment"/></svg></button>
                <button type="button" aria-label="Vodicí linie"><svg class="icon"><use href="#guide"/></svg></button>
                <span class="divider"></span>
                <button type="button" aria-label="Plocha"><svg class="icon"><use href="#surface"/></svg></button>
                <button type="button" class="more" aria-label="Další plochy"></button>
                <button type="button" aria-label="Otvor"><svg class="icon"><use href="#opening"/></svg></button>
                <button type="button" class="more" aria-label="Další otvory"></button>
                <button type="button" aria-label="Zakřivená plocha"><svg class="icon"><use href="#curved"/></svg></button>
                <button type="button" class="more" aria-label="Další zakřivené plochy"></button>
                <button type="button" aria-label="Těleso"><svg class="icon"><use href="#solid"/></svg></button>
                <button type="button" aria-label="Nové těleso"><svg class="icon"><use href="#solid-new"/></svg></button>
                <button type="button" class="more" aria-label="Další tělesa"></button>
                <span class="divider"></span>
                <button type="button" aria-label="Kombinace"><svg class="icon"><use href="#combo"/></svg></button>
                <button type="button" class="more" aria-label="Další kombinace"></button>
                <button type="button" aria-label="Zatížení na uzel"><svg class="icon"><use href="#load-node"/></svg></button>
                <button type="button" aria-label="Zatížení na prut"><svg class="icon"><use href="#load-line"/></svg></button>
                <button type="button" aria-label="Zatížení na linii"><svg class="icon"><use href="#load-line"/></svg></button>
                <button type="button" aria-label="Zatížení na plochu"><svg class="icon"><use href="#load-area"/></svg></button>
                <button type="button" aria-label="Volné zatížení"><svg class="icon"><use href="#load-free"/></svg></button>
                <button type="button" class="more" aria-label="Další zatížení"></button>
            </div>
            <div class="toolbar">
                <span class="grip"></span>
                <button type="button" aria-label="Posun pohledu"><svg class="icon"><use href="#hand-pan"/></svg></button>
                <button type="button" aria-label="Zvětšit okno"><svg class="icon"><use href="#zoom-win"/></svg></button>
                <button type="button" aria-label="Zobrazit vše"><svg class="icon"><use href="#zoom-x"/></svg></button>
                <button type="button" aria-label="Izometrie"><svg class="icon"><use href="#wire"/></svg></button>
                <button type="button" aria-label="Perspektiva"><svg class="icon"><use href="#boxes"/></svg></button>
                <span class="divider"></span>
                <button type="button" aria-label="Pohled X"><svg class="icon"><use href="#view-x"/></svg></button>
                <button type="button" aria-label="Pohled Y"><svg class="icon"><use href="#view-y"/></svg></button>
                <button type="button" aria-label="Pohled Z"><svg class="icon"><use href="#view-z"/></svg></button>
                <button type="button" aria-label="Pohled -X"><svg class="icon"><use href="#view-mx"/></svg></button>
                <button type="button" class="more" aria-label="Další pohledy"></button>
                <button type="button" aria-label="Zrušit viditelnost"><svg class="icon"><use href="#no-view"/></svg></button>
                <button type="button" class="more" aria-label="Viditelnosti"></button>
                <span class="divider"></span>
                <button type="button" aria-label="Zobrazení modelu"><svg class="icon"><use href="#profile"/></svg></button>
                <button type="button" class="more" aria-label="Typy zobrazení"></button>
            </div>
            <div class="toolbar toolbar-fill">
                <span class="grip"></span>
                <button type="button" aria-label="Deformace"><svg class="icon"><use href="#frame"/></svg></button>
                <button type="button" aria-label="Animace"><svg class="icon"><use href="#camera"/></svg></button>
                <span class="divider"></span>
                <button type="button" aria-label="Výsledky na prutech"><svg class="icon"><use href="#res-beam"/></svg></button>
                <button type="button" aria-label="Výsledky na plochách"><svg class="icon"><use href="#res-area"/></svg></button>
                <button type="button" aria-label="Výsledky v tělesech"><svg class="icon"><use href="#res-solid"/></svg></button>
                <button type="button" aria-label="Reakce"><svg class="icon"><use href="#reaction"/></svg></button>
                <button type="button" aria-label="Průběhy"><svg class="icon"><use href="#res-line"/></svg></button>
            </div>
        </div>

        <main class="workspace">
            <aside class="navigator">
                <div class="panel-header">
                    <h2>Navigátor projektu - Data</h2>
                    <button type="button" aria-label="Připnout"><svg width="12" height="12"><path d="M3 1.500h6M4 1v6M8 1v6M1 7.500h10M6 8v4" stroke="#777" stroke-width="1.500"/></svg></button>
                    <button type="button" aria-label="Zavřít panel"><svg width="12" height="12"><path d="M1 1l10 10M11 1L1 11" stroke="#777" stroke-width="1.600"/></svg></button>
                </div>
                <div class="tree-box">
                    <div class="tree-view">
                        <ul class="tree">
                            <li>
                                <div class="row root"><span class="expander">−</span><span class="twig"></span><svg class="node" viewBox="0 0 18 18"><use href="#doc"/></svg>4674* [Downloads]</div>
                                <ul class="level-1">
                                    <li>
                                        <div class="row"><span class="expander">−</span><span class="twig"></span><svg class="node" viewBox="0 0 16 14"><use href="#folder-open"/></svg>Údaje o modelu</div>
                                        <ul class="level-2 closed">
                                            <li class="row"><span class="leaf"></span><svg class="node" viewBox="0 0 16 14"><use href="#folder"/><path d="M7 7h2v2H7z" fill="#d00"/></svg>Uzly</li>
                                            <li class="row"><span class="leaf"></span><svg class="node" viewBox="0 0 16 14"><use href="#folder"/><path d="M4 11l8-7" stroke="#333"/><path d="M3 10h2v2H3zM11 3h2v2h-2z" fill="#d00"/></svg>Linie</li>
                                            <li class="row"><span class="expander">+</span><span class="twig"></span><svg class="node" viewBox="0 0 16 14"><use href="#folder"/><path d="M4 5h4v3H4z" fill="#c33"/><path d="M8 4h4v7H8z" fill="#36c"/><path d="M5 8h3v3H5z" fill="#2a5"/></svg>Materiály</li>
                                            <li class="row"><span class="leaf"></span><svg class="node" viewBox="0 0 16 14"><use href="#folder"/><path d="M4 9l3-3h5l-2 3z" fill="#5b8fd0" stroke="#456"/></svg>Plochy</li>
                                            <li class="row"><span class="leaf"></span><svg class="node" viewBox="0 0 16 14"><use href="#folder"/><path d="M5 4l5-1 2 1v6l-4 1-3-1z" fill="#5b8fd0" stroke="#345"/></svg>Tělesa</li>
                                            <li class="row"><span class="leaf"></span><svg class="node" viewBox="0 0 16 14"><use href="#folder"/><path d="M5.500 5.500h5v4h-5z" fill="#ddd" stroke="#468" stroke-width="2"/></svg>Otvory</li>
                                            <li class="row"><span class="leaf"></span><svg class="node" viewBox="0 0 16 14"><use href="#folder"/><path d="M8 5l4 6H4z" fill="#293"/><path d="M7 3h2v2H7z" fill="#d00"/></svg>Uzlové podpory</li>
                                            <li class="row"><span class="leaf"></span><svg class="node" viewBox="0 0 16 14"><use href="#folder"/><path d="M4 6h8" stroke="#c22" stroke-width="2"/><path d="M4 8h3v2H4zM9 8h3v2H9z" fill="#293"/></svg>Liniové podpory</li>
                                            <li class="row"><span class="leaf"></span><svg class="node" viewBox="0 0 16 14"><use href="#folder"/><path d="M3 6l5-2 5 2-5 5z" fill="#285"/><path d="M3 6l5-2 5 1-5 3z" fill="#37b"/></svg>Plošné podpory</li>
                                            <li class="row"><span class="leaf"></span><svg class="node" viewBox="0 0 16 14"><use href="#folder"/><path d="M3 7l4-1 6 2-1 2-5-1z" fill="#eee" stroke="#888"/></svg>Liniové klouby</li>
                                            <li class="row"><span class="leaf"></span><svg class="node" viewBox="0 0 16 14"><use href="#folder"/><path d="M4 9l3-3h5l-2 3z" fill="#5b8fd0" stroke="#456"/></svg>Proměnné tloušťky</li>
                                            <li class="row"><span class="leaf"></span><svg class="node" viewBox="0 0 16 14"><use href="#folder"/><path d="M3 8l5-3 5 2-5 3z" fill="#c36" stroke="#648"/></svg>Ortotropní plochy a membrány</li>
                                            <li class="row"><span class="leaf"></span><svg class="node" viewBox="0 0 16 14"><use href="#folder"/><path d="M6 4h7l-2 6H5z" fill="#56c"/><path d="M4 4h4M4 10h4M6 4v6" stroke="#c22"/></svg>Průřezy</li>
                                            <li class="row"><span class="leaf"></span><svg class="node" viewBox="0 0 16 14"><use href="#folder"/><path d="M4 4v7M5 7h7" stroke="#555"/><path d="M6 6h2v2H6z" fill="#d00"/></svg>Klouby na koncích prutu</li>
                                            <li class="row"><span class="leaf"></span><svg class="node" viewBox="0 0 16 14"><use href="#folder"/><path d="M4 9l6-5 3 2-6 5z" fill="#eed" stroke="#555"/></svg>Excentricity prutu</li>
                                            <li class="row"><span class="leaf"></span><svg class="node" viewBox="0 0 16 14"><use href="#folder"/><path d="M4 11l8-7M6 6l4 3" stroke="#333"/><path d="M3 10h2v2H3zM11 3h2v2h-2z" fill="#d00"/></svg>Dělení prutu</li>
                                            <li class="row"><span class="leaf"></span><svg class="node" viewBox="0 0 16 14"><use href="#folder"/><path d="M4 11l8-7" stroke="#777" stroke-width="2"/><path d="M11 3h2v2h-2z" fill="#d00"/></svg>Pruty</li>
                                            <li class="row"><span class="leaf"></span><svg class="node" viewBox="0 0 16 14"><use href="#folder"/><path d="M4 8l4-2h5l-3 3H7z" fill="#bbb" stroke="#666"/></svg>Žebra</li>
                                            <li class="row"><span class="leaf"></span><svg class="node" viewBox="0 0 16 14"><use href="#folder"/><path d="M4 6h8" stroke="#c22" stroke-width="2"/><path d="M5 7v4M8 7v4M11 7v4" stroke="#285" stroke-width="2"/></svg>Podloží prutu</li>
                                            <li class="row"><span class="leaf"></span><svg class="node" viewBox="0 0 16 14"><use href="#folder"/><path d="M8 3v9" stroke="#444" stroke-width="2"/><path d="M7 5h2v2H7z" fill="#d00"/></svg>Nelinearity prutu</li>
                                            <li class="row"><span class="leaf"></span><svg class="node" viewBox="0 0 16 14"><use href="#folder"/><path d="M4 11l5-7 3 7M6 8l6-3" fill="none" stroke="#555"/><path d="M3 10h2v2H3zM9 4h2v2H9z" fill="#d00"/></svg>Sady prutů</li>
                                            <li class="row"><span class="leaf"></span><svg class="node" viewBox="0 0 16 14"><use href="#folder"/><path d="M5 7l3-2 3 2-3 3z" fill="#5b8fd0" stroke="#235"/></svg>Průniky ploch</li>
                                            <li class="row"><span class="leaf"></span><svg class="node" viewBox="0 0 16 14"><use href="#folder"/><path d="M4.500 3.500h8v7h-8zM7 4v7M10 4v7M5 7h8" fill="#9bd" stroke="#235"/></svg>Zahuštění sítě prvků</li>
                                            <li class="row"><span class="leaf"></span><svg class="node" viewBox="0 0 16 14"><use href="#folder"/></svg>Uzlová uvolnění</li>
                                            <li class="row"><span class="leaf"></span><svg class="node" viewBox="0 0 16 14"><use href="#folder"/></svg>Typy liniového uvolnění</li>
                                            <li class="row"><span class="leaf"></span><svg class="node" viewBox="0 0 16 14"><use href="#folder"/><path d="M4 8l4-2 4 1-4 3z" fill="#eee" stroke="#888"/></svg>Liniová uvolnění</li>
                                            <li class="row"><span class="leaf"></span><svg class="node" viewBox="0 0 16 14"><use href="#folder"/><path d="M2 9q6 3 11-1v3q-6 3-11 1zM3 5l10-1v3q-5 3-10 0z" fill="#4f9ad8" stroke="#357" stroke-width=".5"/></svg>Typy plošného uvolnění</li>
                                            <li class="row"><span class="leaf"></span><svg class="node" viewBox="0 0 16 14"><use href="#folder"/><path d="M2 9q6 3 11-1v3q-6 3-11 1zM3 5l10-1v3q-5 3-10 0z" fill="#4f9ad8" stroke="#357" stroke-width=".5"/></svg>Plošná uvolnění</li>
                                            <li class="row"><span class="leaf"></span><svg class="node" viewBox="0 0 16 14"><use href="#folder"/></svg>Spojení dvou prutů</li>
                                            <li class="row"><span class="leaf"></span><svg class="node" viewBox="0 0 16 14"><use href="#folder"/></svg>Spoje</li>
                                            <li class="row"><span class="leaf"></span><svg class="node" viewBox="0 0 16 14"><use href="#folder"/><path d="M4 4l8 7M12 4l-8 7" stroke="#333"/><path d="M3 3h2v2H3zM11 3h2v2h-2zM3 10h2v2H3zM11 10h2v2h-2zM7 6h2v2H7z" fill="#d00"/></svg>Uzlové vazby</li>
                                        </ul>
                                    </li>
                                    <li>
                                        <div class="row"><span class="expander">−</span><span class="twig"></span><svg class="node" viewBox="0 0 16 14"><use href="#folder-open"/></svg>Zatěžovací stavy a kombinace</div>
                                        <ul class="level-2">
                                            <li class="row"><span class="leaf"></span><svg class="node" viewBox="0 0 16 14"><path d="M0 12h16" stroke="#555" stroke-width="2"/><path d="M12 3v5M11 7l1 2 1-2z" fill="#3454b8" stroke="#3454b8" stroke-width="2"/></svg>Zatěžovací stavy</li>
                                            <li class="row"><span class="leaf"></span><svg class="node" viewBox="0 0 16 14"><path d="M.5 1.500h5v3h-5zM.5 10.500h5v3h-5z" fill="#fff" stroke="#333"/><path d="M6 2h3l3 4M6 13h3l3-4" fill="none" stroke="#333"/><path d="M11 5h5v4h-5z" fill="#2b5" stroke="#143"/></svg>Kombinace zatížení</li>
                                        </ul>
                                    </li>
                                </ul>
                            </li>
                        </ul>
                        <div class="scroll-y">
                            <svg width="12" height="8"><path d="M1 7l5-5 5 5" fill="none" stroke="#444" stroke-width="2"/></svg>
                            <span class="thumb"></span>
                            <svg width="12" height="8"><path d="M1 1l5 5 5-5" fill="none" stroke="#444" stroke-width="2"/></svg>
                        </div>
                    </div>
                    <div class="scroll-x">
                        <svg width="8" height="12"><path d="M7 1L2 6l5 5" fill="none" stroke="#444" stroke-width="2"/></svg>
                        <span class="thumb"></span>
                        <svg width="8" height="12"><path d="M1 1l5 5-5 5" fill="none" stroke="#444" stroke-width="2"/></svg>
                    </div>
                </div>
                <div class="tabs">
                    <button type="button" class="selected"><svg><use href="#t-data"/></svg>Data</button>
                    <button type="button"><svg><use href="#t-show"/></svg>Zobrazit</button>
                    <button type="button"><svg><use href="#t-views"/></svg>Pohledy</button>
                </div>
            </aside>

            <section class="viewport">
                <svg class="scene" aria-label="Model">
                    <g id="model" transform="translate(302 267)">
                        <g id="workplane"></g>
                        <g id="raster"></g>
                        <g class="dimension">
                            <path d="M1-1L31-14M143 18l30-12M281 39l30-12M121 197l50 7M220 152l51 7M320 107l60 9"/>
                            <path d="M31-13L167 7M171 8l133 20M308 29l70 10M168 203l97-44M268 158l110-50"/>
                            <path class="tip" d="M31-13l9-2-1 5zM167 7l-9 1 1-5zM171 8l9-1-1 5zM304 28l-9 1 1-5zM308 29l9-1-1 5zM168 203l6-6 3 5zM265 159l-6 6-3-5zM268 158l6-6 3 5z"/>
                            <text transform="translate(99 2) rotate(8)">4.000</text>
                            <text transform="translate(237 23) rotate(8)">4.000</text>
                            <text transform="translate(219 185) rotate(-24)">5.000</text>
                            <text transform="translate(319 140) rotate(-24)">5.000</text>
                        </g>
                        <g id="triad">
                            <path d="M0 0l27 4" stroke="#f00" stroke-width="2"/><path d="M36 5l-9-4-1 6z" fill="#b00000"/>
                            <path d="M0 0l-14 6" stroke="#0f0" stroke-width="2"/><path d="M-21 10l4-6 5 5z" fill="#00a000"/>
                            <path d="M0 0v30" stroke="#00f" stroke-width="2"/><path d="M0 39l-3-9h6z" fill="#0000b0"/>
                            <text x="40" y="11" fill="#f00">X</text>
                            <text x="-28" y="15" fill="#0e0">Y</text>
                            <text x="-3" y="52" fill="#00f">Z</text>
                        </g>
                    </g>
                    <use href="#triad" x="55" y="750"/>
                </svg>

                <div class="context-menu" role="menu">
                    <button type="button" class="item" role="menuitem"><span class="slot"></span><span class="label">Opakovat poslední příkaz</span><kbd>Enter</kbd></button>
                    <hr>
                    <button type="button" class="item" role="menuitem"><span class="slot"></span><span class="label">Pohled</span><span class="submenu"></span></button>
                    <button type="button" class="item" role="menuitem"><span class="slot"></span><span class="label">Uživatelský pohled</span><span class="submenu"></span></button>
                    <hr>
                    <button type="button" class="item" role="menuitem"><span class="slot"><svg class="icon"><use href="#m123"/></svg></span><span class="label">Zobrazit číslování</span></button>
                    <button type="button" class="item" role="menuitem" disabled><span class="slot"><svg class="icon"><use href="#eye-load"/></svg></span><span class="label">Zobrazit zatížení</span></button>
                    <button type="button" class="item" role="menuitem" disabled><span class="slot"><svg class="icon"><use href="#eye-res"/></svg></span><span class="label">Zobrazit výsledky</span></button>
                    <button type="button" class="item" role="menuitem" disabled><span class="slot"><svg class="icon"><use href="#form"/></svg></span><span class="label">Zobrazit předběžný form-finding</span></button>
                    <hr>
                    <button type="button" class="item" role="menuitem"><span class="slot"><svg class="icon"><use href="#mdim"/></svg></span><span class="label">Zobrazit kóty</span></button>
                    <button type="button" class="item" role="menuitem"><span class="slot"><svg class="icon"><use href="#mcomment"/></svg></span><span class="label">Zobrazit komentáře</span></button>
                    <button type="button" class="item" role="menuitem"><span class="slot on"><svg class="icon"><use href="#tick"/></svg></span><span class="label">Zobrazit skryté objekty v pozadí</span></button>
                    <hr>
                    <button type="button" class="item" role="menuitem"><span class="slot on"><svg class="icon"><use href="#tick"/></svg></span><span class="label">Zobrazit drátěný nebo plný model</span></button>
                    <hr>
                    <button type="button" class="item" role="menuitem"><span class="slot on"><svg class="icon"><use href="#lock-grid"/></svg></span><span class="label">Zamknout/odemknout vodicí linie</span></button>
                    <button type="button" class="item hover" role="menuitem"><span class="slot on"><svg class="icon"><use href="#tick"/></svg></span><span class="label">Zamknout/odemknout liniové rastry</span><span class="marker"></span></button>
                    <button type="button" class="item" role="menuitem"><span class="slot on"><svg class="icon"><use href="#drag"/></svg></span><span class="label">Umožnit funkci Drag &amp; Drop</span></button>
                    <hr>
                    <button type="button" class="item" role="menuitem"><span class="slot"><svg class="icon"><use href="#auto-rot"/></svg></span><span class="label">Automatické otáčení modelu</span></button>
                    <button type="button" class="item" role="menuitem"><span class="slot on"><svg class="icon"><use href="#auto-con"/></svg></span><span class="label">Automaticky spojit linie/pruty</span></button>
                    <hr>
                    <button type="button" class="item" role="menuitem"><span class="slot"><svg class="icon"><use href="#axes"/></svg></span><span class="label">Souřadný systém...</span></button>
                    <button type="button" class="item" role="menuitem"><span class="slot"><svg class="icon"><use href="#hand-grid"/></svg></span><span class="label">Pracovní rovina, rastr/uchopení, ...</span></button>
                    <hr>
                    <button type="button" class="item" role="menuitem" disabled><span class="slot"><svg class="icon"><use href="#folder-win"/></svg></span><span class="label">Podrobný výběr...</span></button>
                    <hr>
                    <button type="button" class="item" role="menuitem"><span class="slot"></span><span class="label">Barvy v grafice podle</span><span class="submenu"></span></button>
                    <hr>
                    <button type="button" class="item" role="menuitem"><span class="slot"><svg class="icon"><use href="#display"/></svg></span><span class="label">Nastavení zobrazení...</span></button>
                </div>
            </section>
        </main>

        <footer class="statusbar">
            <span class="message">Umožní zamknout resp. odemknout liniové rastry.</span>
            <button type="button" class="w-56">UCHOP</button>
            <button type="button" class="w-47">RASTR</button>
            <button type="button" class="w-64">KARTEZ</button>
            <button type="button" class="w-67">OUCHOP</button>
            <button type="button" class="w-49">VLINIE</button>
            <button type="button" class="w-33">DXF</button>
            <span class="cell cell-wide"></span>
            <span class="cell cell-mid"></span>
            <span class="cell"></span>
            <span class="cell"></span>
            <span class="cell cell-end"><svg width="12" height="12"><path d="M9 1h2v2H9zM9 5h2v2H9zM9 9h2v2H9zM5 5h2v2H5zM5 9h2v2H5zM1 9h2v2H1z" fill="#777c86"/></svg></span>
        </footer>
    </div>
    <script src="scene.js"></script>
</body>
</html>
```
FILE: styles.css
```css
* {
    box-sizing: border-box;
}
body {
    margin: 0;
    font-family: "Open Sans", "Noto Sans", sans-serif;
    font-size: 13px;
    color: #444a55;
    overflow: hidden;
}
button {
    font: inherit;
    color: inherit;
    background: none;
    border: 0;
    margin: 0;
    padding: 0;
}
ul {
    list-style: none;
    margin: 0;
    padding: 0;
}
.library {
    position: absolute;
}
.icon {
    display: block;
    width: 20px;
    height: 20px;
    flex: none;
}
.tiny {
    font-family: "Liberation Sans", sans-serif;
    font-size: 8px;
    fill: #333;
}
.number {
    font-family: "Liberation Sans", sans-serif;
    font-size: 10px;
    fill: #122;
}
.letter {
    font-size: 13px;
    fill: #333;
}
.serif {
    font-family: "Liberation Serif", serif;
}
.bold {
    font-weight: bold;
}

.window {
    display: flex;
    flex-direction: column;
    height: 100vh;
    border: 1px solid #37323f;
    background-color: #cfd4dd;
}

/* title bar */
.titlebar {
    display: flex;
    align-items: center;
    flex: none;
    height: 37px;
    padding-left: 9px;
    background-color: #fff;
    color: #000;
    font-size: 14px;
}
.title {
    margin: 0 0 0 5px;
    width: 173px;
    font-size: 14px;
    font-weight: normal;
}
.window-buttons {
    display: flex;
    margin: 0 1px 2px auto;
}
.window-buttons button {
    display: grid;
    place-items: center;
    width: 58px;
    height: 35px;
}

/* menu bar */
.menubar {
    display: flex;
    align-items: center;
    flex: none;
    height: 30px;
    padding-left: 2px;
}
.grip {
    flex: none;
    width: 8px;
    height: 18px;
    background: repeating-linear-gradient(to bottom, #8f96a5 0 2px, transparent 2px 4px) no-repeat 2px 0 / 2px 100%;
}
.bridge {
    width: 20px;
    height: 16px;
}
.menus {
    display: flex;
    gap: 16px;
    margin-left: 10px;
}
.mdi-buttons {
    display: flex;
    gap: 11px;
    margin: 4px 8px 0 auto;
}

/* toolbars */
.toolbar-row {
    display: flex;
    flex: none;
    gap: 3px;
    height: 32px;
    padding-left: 2px;
    overflow: hidden;
}
.toolbar {
    display: flex;
    align-items: center;
    flex: none;
    border-bottom: 1px solid #9aa0ac;
    border-radius: 0 3px 3px 0;
    background: linear-gradient(#e9edf5, #dfe4ed 50%, #cfd5e0);
}
.toolbar-fill {
    flex: 1;
    min-width: 0;
    overflow: hidden;
}
.toolbar button {
    display: grid;
    place-items: center;
    flex: none;
    width: 28px;
    height: 28px;
}
.toolbar .active {
    border: 1px solid #a58f62;
    border-radius: 2px;
    background: linear-gradient(#fbd9a5, #fdb65c 45%, #ffe58f);
}
.toolbar .more {
    width: 15px;
}
.more::before, .caret {
    content: "";
    width: 7px;
    height: 4px;
    background-color: #808080;
    clip-path: polygon(0 0, 100% 0, 50% 100%);
}
.divider {
    flex: none;
    width: 8px;
    height: 18px;
    background: linear-gradient(to right, #a3a8b3 1px, #fff 1px) no-repeat 3px 0 / 2px 100%;
}
.combo {
    display: flex;
    align-items: center;
    width: 216px;
    height: 22px;
    margin: 0 3px 0 2px;
    padding-right: 5px;
    border: 1px solid #a0a0a0;
    background-color: #f0f0f0;
}
.combo select {
    flex: 1;
    height: 20px;
    border: 0;
    background: none;
    appearance: none;
}

/* workspace */
.workspace {
    display: flex;
    flex: 1;
    min-height: 0;
}
.navigator {
    display: flex;
    flex-direction: column;
    flex: none;
    width: 321px;
    margin: 0 5px 0 1px;
}
.panel-header {
    display: flex;
    align-items: center;
    flex: none;
    gap: 6px;
    height: 29px;
    padding: 0 5px 0 3px;
    background-color: #b9c0cb;
    border-bottom: 1px solid #a3a9b6;
}
.panel-header h2 {
    flex: 1;
    margin: 0;
    font-size: 13px;
    font-weight: normal;
}
.panel-header button {
    display: grid;
    place-items: center;
    width: 12px;
    height: 12px;
}
.tree-box {
    display: flex;
    flex-direction: column;
    flex: 1;
    min-height: 0;
    padding: 2px 3px 2px 2px;
    border-right: 1px solid #8f95a2;
    border-bottom: 1px solid #8f95a2;
    background-color: #f4f6fb;
}
.tree-view {
    display: flex;
    flex: 1;
    min-height: 0;
    border: 1px solid #8b8f98;
    border-width: 1px 0 0 1px;
    background-color: #fcfbf3;
}
.tree {
    flex: 1;
    min-width: 0;
    overflow: hidden;
    color: #000;
    font-size: 14px;
    white-space: nowrap;
}
.row {
    display: flex;
    align-items: center;
    height: 22px;
    padding-left: 25px;
}
.row.root {
    height: 23px;
    padding-left: 6px;
    font-weight: bold;
}
.level-1 {
    background: repeating-linear-gradient(to bottom, #888 0 1px, transparent 1px 2px) no-repeat 30px 0 / 1px 100%;
}
.level-2 {
    background: repeating-linear-gradient(to bottom, #888 0 1px, transparent 1px 2px) no-repeat 49px 0 / 1px 100%;
}
.level-2.closed {
    background-size: 1px calc(100% - 11px);
}
.level-2 .row {
    padding-left: 44px;
}
.expander {
    display: grid;
    place-items: center;
    flex: none;
    width: 11px;
    height: 11px;
    border: 1px solid #8e8f8f;
    border-radius: 1px;
    background: linear-gradient(#fff, #dcdcdc);
    color: #2a4a9a;
    font-size: 12px;
    font-weight: normal;
    line-height: 8px;
}
.twig, .leaf {
    flex: none;
    width: 5px;
    height: 1px;
    background: repeating-linear-gradient(to right, #888 0 1px, transparent 1px 2px);
}
.leaf {
    width: 11px;
    margin-left: 5px;
}
.node {
    flex: none;
    width: 16px;
    height: 14px;
    margin: 0 4px 0 1px;
}
.root .node {
    height: 16px;
}
.scroll-y {
    display: flex;
    flex-direction: column;
    align-items: center;
    flex: none;
    width: 20px;
    padding: 8px 0 7px;
    background-color: #f0f0f0;
}
.scroll-y .thumb {
    width: 19px;
    height: 476px;
    margin: 19px 0 auto;
    background-color: #cdcdcd;
}
.scroll-x {
    display: flex;
    align-items: center;
    flex: none;
    height: 20px;
    padding: 0 27px 0 5px;
    border-left: 1px solid #8b8f98;
    background-color: #f0f0f0;
}
.scroll-x .thumb {
    width: 178px;
    height: 19px;
    margin: 0 auto 0 8px;
    background-color: #cdcdcd;
}
.tabs {
    display: flex;
    flex: none;
    gap: 6px;
    height: 30px;
    padding: 0 0 4px 3px;
}
.tabs button {
    display: flex;
    align-items: center;
    gap: 2px;
    padding: 0 2px;
}
.tabs svg {
    width: 16px;
    height: 16px;
}
.tabs .selected {
    padding: 0 2px 0 1px;
    border: 1px solid #a9dfe6;
    border-top: 0;
    border-radius: 0 0 3px 3px;
    background-color: #f2f7fb;
}

/* 3D view */
.viewport {
    position: relative;
    flex: 1;
    min-width: 0;
    border: 1px solid #66666c;
    border-width: 1px 1px 0 1px;
    border-right-color: #d8dbe0;
    margin: 1px 0 1px;
    background-color: #fff;
}
.scene {
    display: block;
    width: 100%;
    height: 100%;
    overflow: hidden;
}
.ground {
    fill: #fcfcfc;
}
.grid-line, .raster-line {
    fill: none;
    stroke: #cfcfcf;
}
.raster-line {
    stroke: #c4c4c4;
}
.raster-node {
    fill: #bcbcbc;
}
.axis-line {
    fill: none;
    stroke: #00807c;
    stroke-dasharray: 6 1;
}
.dot {
    fill: #000;
}
.dimension {
    fill: none;
    stroke: #000080;
}
.dimension .tip {
    fill: #000080;
}
.dimension text {
    fill: #000080;
    stroke: #fcfcfc;
    stroke-width: 4px;
    paint-order: stroke;
    text-anchor: middle;
    font: bold 11px "Liberation Sans", sans-serif;
}
#triad text {
    font: 10px "Liberation Sans", sans-serif;
}

/* context menu */
.context-menu {
    position: absolute;
    left: 651px;
    top: 93px;
    width: 307px;
    padding: 2px 1px;
    border: 1px solid #868686;
    border-radius: 2px;
    background: linear-gradient(to right, #e9edf7 29px, #c5c5c5 29px 30px, #fafafa 30px);
    box-shadow: 2px 2px 2px rgba(0, 0, 0, 0.35);
}
.item {
    position: relative;
    display: flex;
    align-items: center;
    width: 100%;
    height: 28px;
    text-align: left;
}
.slot {
    display: grid;
    place-items: center;
    flex: none;
    width: 24px;
    height: 26px;
    margin: 0 5px 0 2px;
}
.slot.on {
    border: 1px solid #f29536;
    border-radius: 2px;
    background-color: #ffe19a;
}
.label {
    flex: 1;
    padding-left: 3px;
}
.item kbd {
    margin-right: 14px;
    font: inherit;
}
.submenu {
    width: 6px;
    height: 11px;
    margin-right: 6px;
    background-color: #444a55;
    clip-path: polygon(0 0, 100% 50%, 0 100%);
}
.item:disabled {
    color: #a5a5a5;
}
.item:disabled .icon {
    opacity: 0.8;
}
.hover .label {
    height: 28px;
    line-height: 26px;
    border: 1px solid #dcc06e;
    border-left: 0;
    border-radius: 2px;
    background: linear-gradient(to right, rgba(255, 246, 214, 0.6), transparent), linear-gradient(#fffae6, #fdeeb4 48%, #ffd42e 50%, #ffe88a);
}
.marker {
    position: absolute;
    left: -3px;
    top: -3px;
    width: 33px;
    height: 33px;
    border: 4px solid #ed1c24;
}
.context-menu hr {
    height: 1px;
    margin: 3px 0 4px 36px;
    border: 0;
    background-color: #c5c5c5;
}

/* status bar */
.statusbar {
    display: flex;
    align-items: stretch;
    flex: none;
    gap: 2px;
    height: 26px;
    padding: 0 1px 0 4px;
    border-top: 1px solid #9ba1ac;
    background: linear-gradient(#e2e4ea, #b4b9c4 35%, #a5abb4 50%, #b9bdc7);
    color: #26282c;
    font-family: "Liberation Sans", sans-serif;
}
.message {
    flex: 0 0 534px;
    line-height: 26px;
}
.statusbar button {
    flex: none;
    padding: 0 1px 4px;
    border: 1px solid #111;
    border-right-color: #fff;
    border-bottom-color: #fff;
    overflow: hidden;
    white-space: nowrap;
    line-height: 18px;
    text-align: left;
}
.w-33 {
    width: 33px;
}
.w-47 {
    width: 47px;
}
.w-49 {
    width: 49px;
}
.w-56 {
    width: 56px;
}
.w-64 {
    width: 64px;
}
.statusbar .w-64 {
    padding-left: 5px;
}
.w-67 {
    width: 67px;
}
.cell {
    flex: 0 0 72px;
    border-left: 1px solid #8f959f;
}
.cell-wide {
    flex: 1;
}
.cell-mid {
    flex-basis: 86px;
}
.cell-end {
    display: flex;
    align-items: flex-end;
    justify-content: flex-end;
    flex-basis: 94px;
}
```
FILE: scene.js
```js
// screen vectors of one metre along the X, Y and Z axes, from the model origin
const X = [34.47, 5.167];
const Y = [-19.88, 8.93];
const LEVEL = 96;

function point(x, y, level = 0) {
    return [x * X[0] + y * Y[0], x * X[1] + y * Y[1] - level * LEVEL];
}

function add(parent, tag, attrs) {
    const el = document.createElementNS('http://www.w3.org/2000/svg', tag);
    for (const key in attrs) el.setAttribute(key, attrs[key]);
    parent.appendChild(el);
}

function line(parent, cls, a, b) {
    add(parent, 'path', { class: cls, d: `M${a.join(' ')}L${b.join(' ')}` });
}

const plane = document.getElementById('workplane');
const raster = document.getElementById('raster');

// work plane: 60 x 60 m, a line every 10 m, a dot every metre
const corners = [point(-30, -30), point(30, -30), point(30, 30), point(-30, 30)];
add(plane, 'polygon', { class: 'ground', points: corners.join(' ') });
for (let k = -30; k <= 30; k += 10) {
    if (k === 0) continue;
    line(plane, 'grid-line', point(k, -30), point(k, 30));
    line(plane, 'grid-line', point(-30, k), point(30, k));
}
// the axes stop where the line raster runs over them
line(plane, 'axis-line', point(-30, 0), point(0, 0));
line(plane, 'axis-line', point(12, 0), point(30, 0));
line(plane, 'axis-line', point(0, -30), point(0, 0));
line(plane, 'axis-line', point(0, 15), point(0, 30));

let dots = '';
for (let x = -30; x <= 30; x++) {
    for (let y = -30; y <= 30; y++) {
        const [px, py] = point(x, y).map(Math.round);
        dots += `M${px} ${py}h1v1h-1z`;
    }
}
add(plane, 'path', { class: 'dot', d: dots });

// line raster: 3 x 4 m, 3 x 5 m, 2 levels
for (let i = 0; i <= 3; i++) {
    for (let l = 0; l <= 2; l++) {
        line(raster, 'raster-line', point(i * 4, 0, l), point(i * 4, 15, l));
        line(raster, 'raster-line', point(0, i * 5, l), point(12, i * 5, l));
    }
    for (let j = 0; j <= 3; j++) {
        line(raster, 'raster-line', point(i * 4, j * 5, 0), point(i * 4, j * 5, 2));
        for (let l = 0; l <= 2; l++) {
            const [cx, cy] = point(i * 4, j * 5, l);
            add(raster, 'circle', { class: 'raster-node', cx, cy, r: 2 });
        }
    }
}
```
